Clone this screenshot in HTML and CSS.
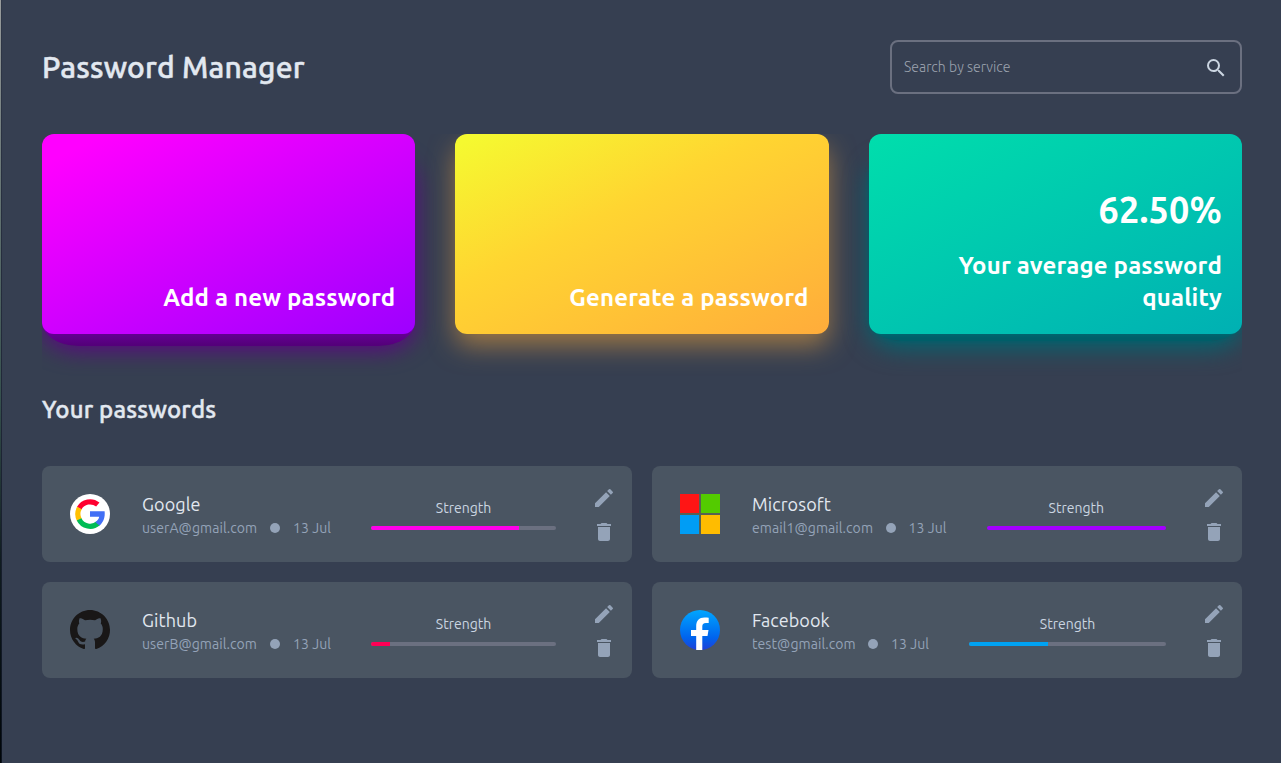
FILE: index.html
```html
<!DOCTYPE html>
<html lang="en">
<head>
<meta charset="utf-8">
<title>Password Manager</title>
<link rel="stylesheet" href="styles.css">
</head>
<body>
<svg width="0" height="0" class="sprite">
  <symbol id="pencil" viewBox="0 0 24 24"><path d="M3 17.25V21h3.75L17.81 9.94l-3.75-3.75L3 17.25zM20.71 7.04a1 1 0 0 0 0-1.41l-2.34-2.34a1 1 0 0 0-1.41 0l-1.83 1.83 3.75 3.75 1.83-1.83z"/></symbol>
  <symbol id="trash" viewBox="0 0 24 24"><path d="M6 19c0 1.1.9 2 2 2h8c1.1 0 2-.9 2-2V7H6v12zM19 4h-3.500l-1-1h-5l-1 1H5v2h14V4z"/></symbol>
</svg>
<main class="page">
  <header class="header">
    <h1 class="title">Password Manager</h1>
    <div class="search">
      <span class="search-text">Search by service</span>
      <svg class="search-icon" viewBox="0 0 24 24"><path d="M15.500 14h-.79l-.28-.27A6.470 6.470 0 0 0 16 9.500 6.500 6.500 0 1 0 9.500 16c1.610 0 3.090-.59 4.230-1.570l.27.28v.79l5 4.990L20.490 19l-4.990-5zm-6 0C7.010 14 5 11.990 5 9.500S7.010 5 9.500 5 14 7.010 14 9.500 11.990 14 9.500 14z"/></svg>
    </div>
  </header>
  <section class="tiles">
    <div class="tile tile-add"><p class="tile-text">Add a new password</p></div>
    <div class="tile tile-generate"><p class="tile-text">Generate a password</p></div>
    <div class="tile tile-quality"><p class="percent">62.50%</p><p class="tile-text">Your average password<br>quality</p></div>
  </section>
  <h2 class="subtitle">Your passwords</h2>
  <section class="list">
    <article class="entry">
      <svg class="logo" viewBox="0 0 40 40"><circle cx="20" cy="20" r="20" fill="#fff"/><g fill="none" stroke-width="5.200"><path d="M9.200 14.300A12.300 12.300 0 0 1 27.800 10.600" stroke="#ff0030"/><path d="M9.400 25.900A12.300 12.300 0 0 1 9.400 14.100" stroke="#ffc000"/><path d="M28.200 29.300A12.300 12.300 0 0 1 9.100 25.300" stroke="#00bc55"/></g><path d="M20 17.300H34.600C35.300 23 33.600 28 29.600 31.600L25.400 28.200C27.400 26.800 28.700 25 29.200 22.700H20z" fill="#426ff5"/></svg>
      <div class="info"><h3 class="name">Google</h3><div class="meta"><span class="email-user">userA@gmail.com</span><i class="dot"></i><span class="date">13 Jul</span></div></div>
      <div class="strength"><span class="label">Strength</span><div class="bar"><div class="fill magenta" style="width:80%"></div></div></div>
      <div class="actions"><svg class="action"><use href="#pencil"/></svg><svg class="action"><use href="#trash"/></svg></div>
    </article>
    <article class="entry">
      <svg class="logo" viewBox="0 0 40 40"><path fill="#576153" d="M0 0h40v40H0z"/><path fill="#ff1515" d="M0 0h19v19H0z"/><path fill="#53cb00" d="M21 0h19v19H21z"/><path fill="#009df5" d="M0 21h19v19H0z"/><path fill="#ffbc00" d="M21 21h19v19H21z"/></svg>
      <div class="info"><h3 class="name">Microsoft</h3><div class="meta"><span class="email-one">email1@gmail.com</span><i class="dot"></i><span class="date">13 Jul</span></div></div>
      <div class="strength"><span class="label">Strength</span><div class="bar"><div class="fill violet" style="width:100%"></div></div></div>
      <div class="actions"><svg class="action"><use href="#pencil"/></svg><svg class="action"><use href="#trash"/></svg></div>
    </article>
    <article class="entry">
      <svg class="logo" viewBox="0 0 16 16"><path fill="#191717" d="M8 0C3.580 0 0 3.580 0 8c0 3.540 2.290 6.530 5.470 7.590.4.070.55-.17.55-.38 0-.19-.01-.82-.01-1.490-2.010.37-2.530-.49-2.690-.94-.09-.23-.48-.94-.82-1.130-.28-.15-.68-.52-.01-.53.63-.01 1.080.58 1.230.82.72 1.210 1.870.87 2.330.66.07-.52.28-.87.51-1.070-1.780-.2-3.640-.89-3.640-3.950 0-.87.31-1.590.82-2.150-.08-.2-.36-1.020.08-2.120 0 0 .67-.21 2.200.82a7.500 7.500 0 0 1 4 0c1.530-1.040 2.200-.82 2.200-.82.44 1.100.16 1.920.08 2.120.51.56.82 1.270.82 2.150 0 3.070-1.870 3.750-3.650 3.950.29.25.54.73.54 1.480 0 1.070-.01 1.930-.01 2.200 0 .21.15.46.55.38A8 8 0 0 0 16 8c0-4.420-3.580-8-8-8z"/></svg>
      <div class="info"><h3 class="name">Github</h3><div class="meta"><span class="email-user">userB@gmail.com</span><i class="dot"></i><span class="date">13 Jul</span></div></div>
      <div class="strength"><span class="label">Strength</span><div class="bar"><div class="fill red" style="width:10%"></div></div></div>
      <div class="actions"><svg class="action"><use href="#pencil"/></svg><svg class="action"><use href="#trash"/></svg></div>
    </article>
    <article class="entry">
      <svg class="logo" viewBox="0 0 40 40"><defs><linearGradient id="blue" x2="0" y2="1"><stop stop-color="#00a6ff"/><stop offset=".7" stop-color="#0063ed"/><stop offset="1" stop-color="#2140d8"/></linearGradient></defs><circle cx="20" cy="20" r="20" fill="url(#blue)"/><path fill="#fff" d="M16.200 40V25.900H11V20h5.200v-3.700C16.200 10.500 19.200 7.500 24.500 7.500c1.600 0 3 .1 4.200.3v5.100H26c-2.800 0-3.700 1.300-3.700 3.700V20h6.200l-1 5.900h-5.200V40z"/></svg>
      <div class="info"><h3 class="name">Facebook</h3><div class="meta"><span class="email-test">test@gmail.com</span><i class="dot"></i><span class="date">13 Jul</span></div></div>
      <div class="strength"><span class="label">Strength</span><div class="bar"><div class="fill azure" style="width:40%"></div></div></div>
      <div class="actions"><svg class="action"><use href="#pencil"/></svg><svg class="action"><use href="#trash"/></svg></div>
    </article>
  </section>
</main>
</body>
</html>
```
FILE: styles.css
```css
* { box-sizing: border-box; margin: 0; padding: 0; }
body {
  height: 763px;
  overflow: hidden;
  font-family: Ubuntu, "Noto Sans", sans-serif;
  color: #e2e8f0;
  background:
    linear-gradient(#999c9c 0, #758080 130px, #35504d 400px, #101c20 560px, #000508 763px) 0 0 / 1px 100% no-repeat,
    linear-gradient(#303848 0, #202838 400px, #0c131f 763px) 1px 0 / 1px 100% no-repeat,
    #363f51;
}
.sprite { display: block; }
.page { width: 1200px; margin-left: 42px; padding-top: 40px; }
.header { display: flex; justify-content: space-between; align-items: center; height: 54px; }
.title { font-size: 30px; line-height: 40px; font-weight: 500; letter-spacing: .19px; white-space: nowrap; -webkit-text-stroke: .5px; }
.search { display: flex; align-items: center; justify-content: space-between; width: 352px; height: 54px; padding: 0 12px; border: 2px solid #6b7080; border-radius: 8px; }
.search-text { font-size: 14px; font-weight: 300; letter-spacing: .04px; color: #9ca3af; }
.search-icon { width: 24px; height: 24px; margin-top: 2px; fill: #cbd5e1; }
.tiles { display: grid; grid-template-columns: repeat(3, 1fr); gap: 40px; margin-top: 40px; height: 242px; overflow: hidden; isolation: isolate; }
.tile { position: relative; display: flex; flex-direction: column; justify-content: flex-end; align-items: flex-end; height: 200px; padding: 20px; border-radius: 12px; text-align: right; color: #fff; }
.tile-add { background: linear-gradient(154deg, #f0f 8%, #9d00ff); }
.tile-add::before { content: ""; position: absolute; z-index: -1; inset: 20px 0 -11.500px; border-radius: 36px / 24px; background: linear-gradient(#7400ac 168px, #54007a 191px); box-shadow: 0 4px 22px #5c0685; }
.tile-generate { background: linear-gradient(154deg, #f5f930 3%, #ffd531 40%, #ffac3b); box-shadow: 0 12px 27px -1px rgba(255, 172, 59, .52); }
.tile-quality { background: linear-gradient(154deg, #00deac, #00b0b3); }
.tile-quality::before { content: ""; position: absolute; z-index: -1; inset: 20px 0 -7px; border-radius: 32px / 22px; background: linear-gradient(#007b83 168px, #005e68 184px); box-shadow: 0 0 4px #005e68, 0 7px 25px #006873; }
.tile-text { font-size: 24px; line-height: 32px; font-weight: 600; letter-spacing: .16px; white-space: nowrap; }
.percent { font-size: 36px; line-height: 40px; font-weight: 600; letter-spacing: .17px; margin-bottom: 20px; }
.subtitle { margin-top: 14px; font-size: 24px; line-height: 40px; font-weight: 500; letter-spacing: .17px; -webkit-text-stroke: .45px; }
.list { display: grid; grid-template-columns: 1fr 1fr; gap: 20px; margin-top: 36px; }
.entry { display: flex; align-items: center; height: 96px; padding: 0 16px 0 28px; border-radius: 8px; background: #4a5562; }
.logo { width: 40px; height: 40px; flex: none; overflow: visible; }
.info { margin: 0 40px 0 32px; padding-top: 2px; }
.name { font-size: 18px; line-height: 26px; font-weight: 400; letter-spacing: .1px; }
.meta { display: flex; align-items: center; height: 22px; font-size: 14px; line-height: 20px; letter-spacing: .08px; color: #94a3b8; white-space: nowrap; }
.email-user { width: 115px; }
.email-one { width: 120.500px; }
.email-test { width: 103px; }
.dot { width: 10px; height: 10px; margin: 0 13px; border-radius: 50%; background: #94a3b8; }
.date { width: 38px; }
.strength { flex: 1; display: flex; flex-direction: column; align-items: center; padding-bottom: 1px; }
.label { font-size: 14px; line-height: 20px; color: #cbd5e1; }
.bar { width: 100%; height: 4px; margin-top: 8px; border-radius: 2px; background: #6b7080; overflow: hidden; }
.fill { height: 4px; }
.magenta { background: #ff00ea; }
.violet { background: #a400ff; }
.red { background: #ff0055; }
.azure { background: #00a2f2; }
.actions { display: flex; flex-direction: column; gap: 10px; margin-left: 36px; padding-top: 1px; }
.action { display: block; width: 24px; height: 24px; fill: #94a3b8; }
```
